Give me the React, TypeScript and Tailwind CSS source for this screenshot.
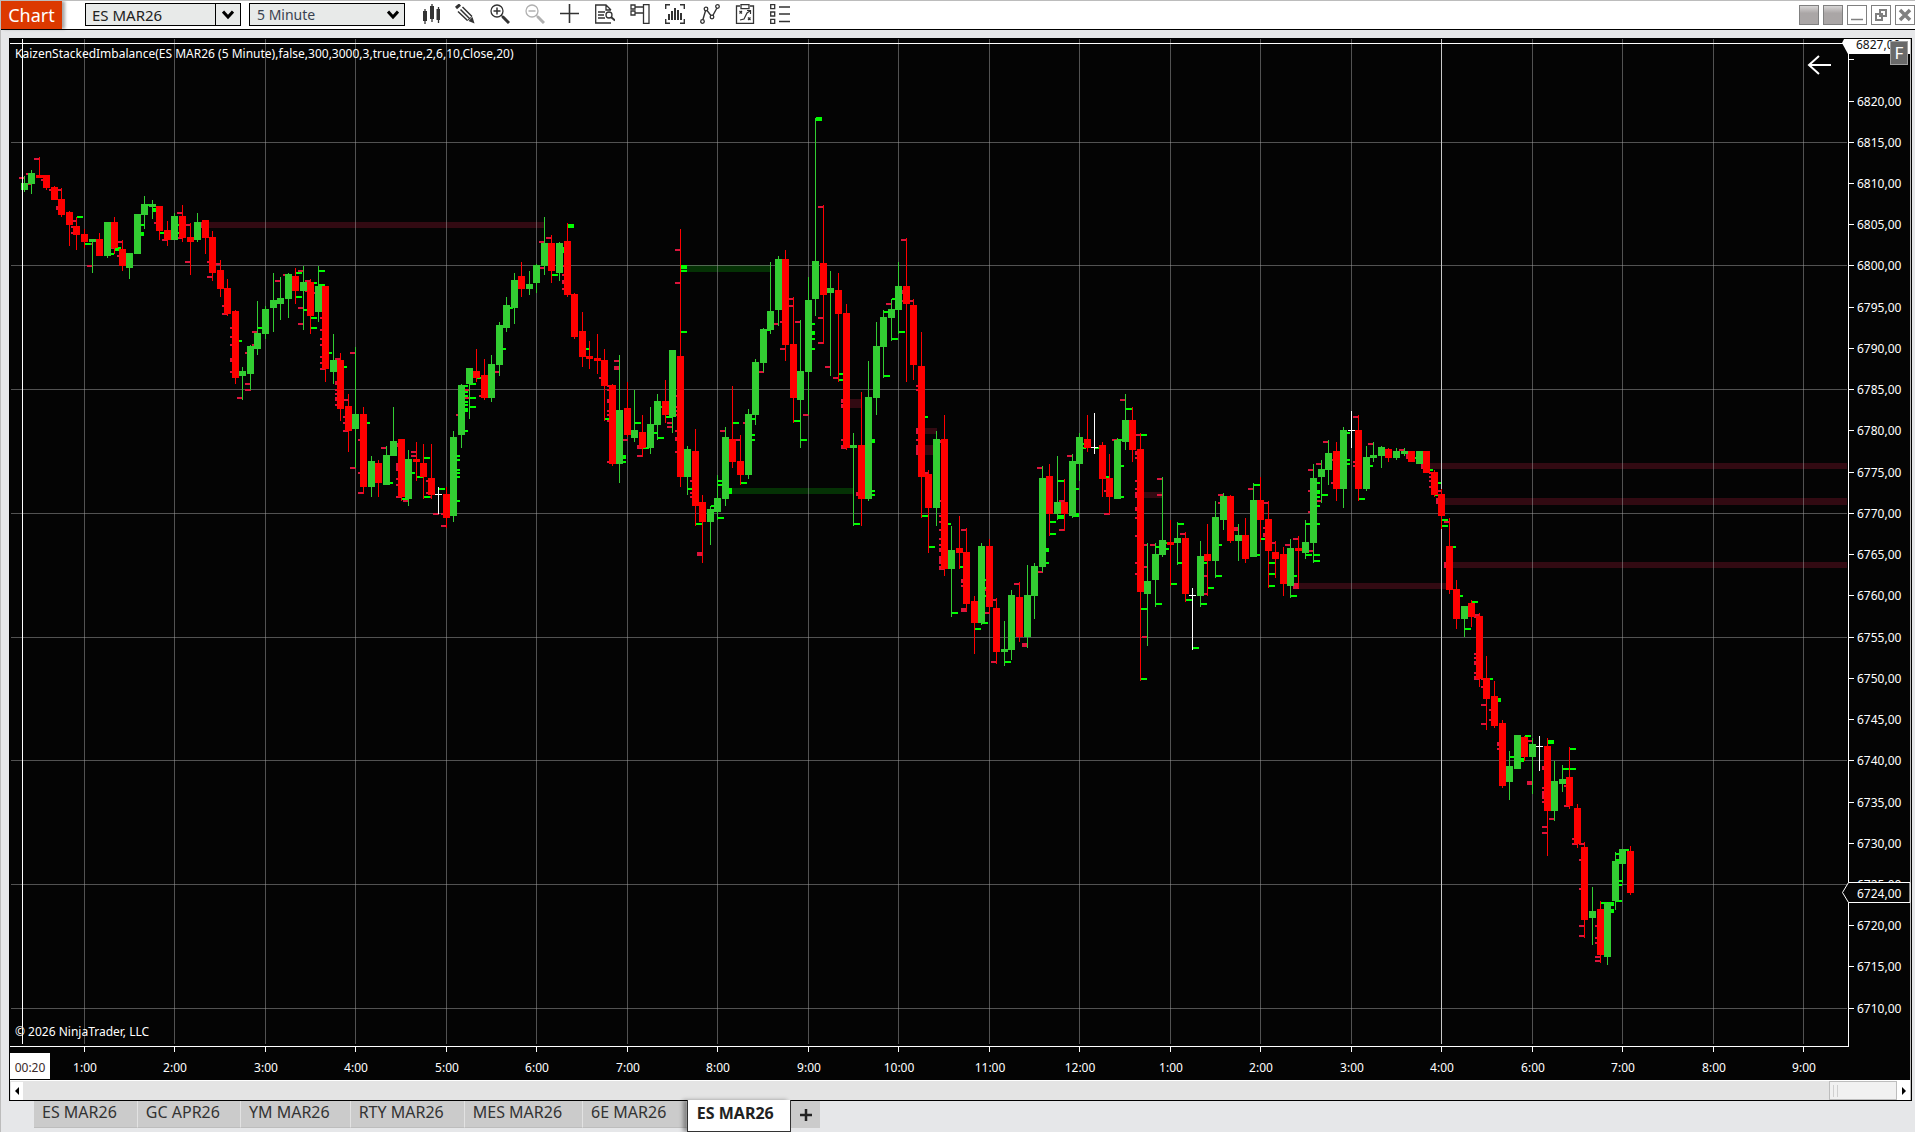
import React from "react";

type Kind = "u" | "d" | "w";
// kind, high, body top, body bottom, low (plot pixels)
type Candle = [Kind, number, number, number, number];
// candle index, y, height (one tick = 2px when left out)
type Mark = [number, number, number?];

const candles: Candle[] = [
  ["u", 176, 183, 190, 192], ["u", 170, 173, 184, 194], ["d", 157, 175, 178, 178], ["d", 175, 175, 188, 190],
  ["d", 186, 187, 200, 200], ["d", 188, 199, 215, 217], ["d", 211, 212, 225, 246], ["d", 217, 226, 235, 250],
  ["d", 229, 234, 242, 248], ["u", 239, 239, 242, 273], ["d", 233, 239, 256, 256], ["u", 222, 222, 256, 258],
  ["d", 217, 222, 248, 254], ["d", 240, 249, 266, 271], ["u", 253, 253, 268, 279], ["u", 214, 214, 254, 254],
  ["u", 196, 204, 215, 229], ["u", 200, 204, 207, 219], ["d", 206, 206, 231, 240], ["d", 221, 230, 240, 246],
  ["u", 213, 216, 240, 240], ["d", 205, 216, 238, 242], ["d", 223, 237, 242, 275], ["u", 213, 222, 240, 242],
  ["d", 220, 220, 238, 254], ["d", 231, 237, 273, 281], ["d", 260, 270, 289, 297], ["d", 279, 288, 314, 316],
  ["d", 310, 311, 378, 384], ["u", 367, 371, 376, 400], ["u", 345, 346, 374, 390], ["u", 301, 333, 349, 355],
  ["u", 306, 309, 334, 339], ["u", 273, 300, 308, 332], ["u", 277, 298, 304, 320], ["u", 273, 274, 299, 318],
  ["d", 268, 276, 291, 304], ["u", 266, 282, 291, 330], ["d", 279, 282, 316, 334], ["u", 266, 286, 312, 322],
  ["d", 286, 286, 369, 382], ["u", 334, 360, 372, 384], ["d", 353, 360, 409, 421], ["d", 394, 406, 431, 452],
  ["u", 347, 414, 429, 468], ["d", 407, 414, 487, 494], ["u", 456, 461, 487, 497], ["d", 460, 463, 483, 497],
  ["u", 446, 455, 485, 485], ["u", 407, 441, 456, 456], ["d", 439, 439, 497, 501], ["u", 450, 459, 499, 506],
  ["d", 442, 459, 462, 481], ["d", 444, 463, 477, 499], ["d", 444, 478, 495, 499], ["w", 487, 494, 495, 514],
  ["d", 487, 494, 518, 528], ["u", 431, 437, 516, 522], ["u", 384, 385, 435, 448], ["u", 368, 368, 384, 419],
  ["d", 349, 371, 378, 382], ["d", 359, 375, 398, 400], ["u", 355, 364, 398, 402], ["u", 322, 325, 365, 376],
  ["u", 297, 305, 328, 332], ["u", 273, 280, 308, 324], ["d", 262, 276, 289, 297], ["u", 271, 284, 289, 295],
  ["u", 264, 265, 283, 293], ["u", 217, 243, 266, 275], ["d", 235, 243, 271, 283], ["u", 242, 243, 273, 281],
  ["d", 223, 241, 295, 297], ["d", 293, 294, 337, 339], ["d", 312, 331, 357, 367], ["d", 341, 356, 359, 369],
  ["d", 334, 358, 361, 374], ["d", 349, 360, 386, 421], ["d", 384, 385, 464, 466], ["u", 355, 410, 464, 483],
  ["d", 382, 408, 435, 437], ["u", 390, 430, 438, 442], ["d", 415, 432, 448, 457], ["u", 407, 424, 448, 454],
  ["u", 394, 401, 425, 440], ["d", 380, 401, 415, 423], ["u", 350, 350, 417, 433], ["d", 229, 356, 477, 487],
  ["u", 446, 449, 477, 495], ["d", 429, 451, 506, 526], ["d", 495, 502, 522, 563], ["u", 506, 509, 522, 545],
  ["u", 475, 498, 512, 520], ["u", 427, 437, 499, 506], ["d", 386, 439, 462, 468], ["d", 435, 461, 475, 485],
  ["u", 409, 414, 475, 479], ["u", 359, 362, 415, 425], ["u", 328, 329, 363, 372], ["u", 262, 311, 330, 334],
  ["u", 256, 259, 310, 326], ["d", 250, 259, 345, 361], ["d", 297, 344, 398, 423], ["u", 320, 371, 400, 448],
  ["u", 277, 300, 372, 415], ["u", 118, 261, 299, 316], ["d", 205, 263, 295, 344], ["u", 271, 288, 293, 376],
  ["d", 273, 290, 314, 382], ["d", 304, 313, 448, 450], ["u", 433, 445, 448, 526], ["d", 392, 445, 499, 526],
  ["u", 361, 397, 499, 501], ["u", 322, 346, 398, 415], ["u", 310, 317, 347, 378], ["u", 299, 309, 318, 341],
  ["u", 262, 286, 310, 334], ["d", 238, 286, 304, 382], ["d", 299, 305, 365, 380], ["d", 332, 366, 477, 518],
  ["d", 470, 474, 508, 553], ["u", 431, 439, 508, 526], ["d", 415, 439, 569, 576], ["u", 526, 550, 569, 617],
  ["d", 516, 548, 553, 569], ["d", 528, 552, 604, 611], ["d", 596, 601, 623, 654], ["u", 543, 546, 623, 625],
  ["d", 539, 546, 607, 614], ["d", 598, 608, 652, 664], ["u", 621, 649, 652, 666], ["u", 590, 595, 650, 660],
  ["d", 582, 597, 637, 642], ["u", 565, 595, 637, 648], ["u", 563, 566, 596, 619], ["u", 466, 478, 567, 572],
  ["d", 464, 476, 514, 536], ["u", 456, 502, 514, 520], ["d", 479, 502, 514, 531], ["u", 454, 461, 516, 518],
  ["u", 433, 437, 464, 481], ["d", 415, 439, 448, 452], ["w", 413, 447, 448, 454], ["d", 442, 445, 479, 497],
  ["d", 454, 478, 497, 514], ["u", 438, 440, 499, 499], ["u", 394, 420, 442, 450], ["d", 407, 420, 450, 462],
  ["d", 433, 449, 592, 681], ["u", 543, 581, 594, 646], ["u", 543, 554, 580, 607], ["u", 477, 540, 555, 557],
  ["d", 520, 542, 545, 586], ["u", 522, 538, 543, 565], ["d", 532, 538, 594, 602], ["w", 588, 595, 596, 650],
  ["u", 541, 556, 596, 607], ["d", 524, 554, 561, 596], ["u", 501, 517, 561, 578], ["u", 493, 496, 520, 530],
  ["d", 495, 496, 541, 543], ["u", 524, 535, 541, 561], ["d", 518, 535, 559, 563], ["u", 483, 500, 557, 557],
  ["d", 477, 500, 520, 542], ["d", 501, 519, 551, 588], ["d", 541, 552, 559, 578], ["d", 547, 554, 584, 596],
  ["u", 539, 548, 586, 598], ["d", 536, 548, 551, 588], ["u", 520, 542, 553, 559], ["u", 464, 478, 543, 563],
  ["u", 460, 469, 477, 503], ["u", 440, 453, 470, 485], ["d", 442, 451, 489, 501], ["u", 427, 430, 489, 508],
  ["w", 411, 430, 431, 448], ["d", 415, 430, 489, 501], ["u", 446, 457, 489, 491], ["u", 442, 455, 458, 462],
  ["u", 446, 447, 456, 468], ["d", 448, 449, 458, 462], ["u", 448, 451, 458, 460], ["u", 448, 451, 454, 456],
  ["d", 451, 451, 462, 462], ["u", 451, 451, 464, 464], ["d", 451, 451, 473, 473], ["d", 470, 472, 495, 497],
  ["d", 489, 494, 516, 529], ["d", 518, 546, 590, 594], ["d", 580, 589, 619, 629], ["u", 606, 606, 619, 637],
  ["d", 600, 603, 617, 627], ["d", 613, 616, 679, 687], ["d", 656, 678, 699, 730], ["d", 681, 696, 726, 728],
  ["d", 720, 723, 786, 788], ["u", 751, 766, 782, 800], ["u", 735, 735, 769, 769], ["d", 736, 737, 757, 761],
  ["u", 738, 744, 757, 794], ["w", 736, 746, 747, 771], ["d", 738, 746, 811, 856], ["u", 761, 781, 811, 821],
  ["u", 765, 779, 784, 792], ["d", 747, 777, 806, 809], ["d", 804, 808, 844, 848], ["d", 842, 847, 920, 938],
  ["u", 887, 911, 918, 945], ["d", 901, 909, 955, 963], ["u", 902, 903, 957, 965], ["u", 852, 861, 901, 910],
  ["u", 849, 849, 864, 883], ["d", 846, 851, 893, 895],
];

const sellMarks: Mark[] = [
  [0, 177], [1, 173], [1, 183], [2, 158], [3, 179], [4, 189], [5, 189], [5, 206, 4], [7, 220], [7, 226], [7, 232],
  [9, 243], [9, 265], [12, 234], [12, 247], [13, 241], [13, 255], [18, 222], [19, 239], [21, 212], [21, 237],
  [22, 224], [22, 261], [24, 222, 6], [25, 261], [25, 276], [26, 263], [27, 305], [27, 313], [28, 327], [28, 336],
  [28, 344], [28, 358, 4], [28, 371], [29, 397], [30, 352], [30, 383], [30, 389], [31, 331], [31, 344], [34, 280],
  [35, 274], [37, 270], [37, 307], [37, 323], [38, 280], [38, 290], [39, 292], [40, 317], [40, 329], [40, 338],
  [40, 344], [40, 356], [40, 362], [40, 368], [42, 358], [42, 381, 4], [42, 389], [42, 393], [42, 397, 4], [42, 404],
  [43, 399], [43, 416], [43, 422], [43, 430], [44, 352], [44, 467], [45, 439], [45, 472], [45, 492], [48, 447],
  [50, 443, 4], [50, 463, 8], [50, 478], [50, 484], [50, 496], [51, 500], [52, 451], [52, 455], [53, 476],
  [54, 480], [54, 492], [54, 496], [55, 513], [56, 513], [56, 525], [58, 414], [59, 389], [59, 397], [61, 395],
  [63, 371], [69, 241], [69, 267], [70, 237], [72, 265], [72, 274], [72, 280, 4], [72, 288], [77, 377], [78, 385],
  [78, 389], [78, 399, 4], [78, 410], [78, 414], [78, 420], [78, 461], [79, 360], [79, 366, 4], [80, 439],
  [82, 445, 4], [82, 455], [86, 422], [86, 426], [87, 249], [87, 282], [87, 395], [87, 406], [87, 410], [87, 414],
  [87, 430], [87, 437, 4], [87, 451], [89, 480], [89, 492], [89, 496], [90, 552, 4], [93, 430], [95, 439],
  [96, 422], [98, 371], [100, 323], [101, 321], [101, 348], [102, 298], [102, 305], [103, 321], [104, 414],
  [106, 206], [106, 317], [106, 342], [107, 366], [108, 377], [109, 379], [109, 399, 4], [109, 404, 4], [109, 439],
  [109, 445, 4], [111, 492, 4], [115, 303], [117, 239], [117, 290, 4], [117, 300], [118, 300], [119, 385],
  [119, 389], [119, 428, 6], [119, 439], [119, 445, 10], [120, 472], [122, 440, 3], [122, 500], [122, 515],
  [122, 521], [122, 529], [122, 538], [122, 544], [122, 548, 4], [122, 556, 8], [122, 566, 4], [125, 529],
  [125, 579, 4], [125, 585], [125, 608, 4], [128, 589], [128, 612], [129, 599], [129, 661], [132, 583],
  [133, 643, 4], [135, 467], [135, 571], [138, 500], [138, 529], [139, 455], [144, 490], [144, 513], [145, 439],
  [146, 399], [147, 408], [148, 434], [148, 451, 4], [148, 457], [148, 480], [148, 488], [148, 492, 6],
  [148, 507, 4], [148, 517], [148, 535], [148, 562], [148, 573], [149, 544], [149, 566], [149, 636], [150, 544],
  [151, 478], [151, 494], [154, 533], [157, 575], [157, 593], [159, 494], [159, 502], [161, 527, 4], [163, 488],
  [165, 502], [165, 527], [165, 533, 4], [166, 542], [168, 544], [169, 538], [169, 583, 6], [171, 469], [171, 490],
  [171, 511], [171, 550], [172, 463], [172, 500], [173, 441], [174, 459], [174, 482], [177, 416], [177, 461],
  [177, 465], [179, 443], [181, 449], [183, 449], [184, 454, 5], [186, 464, 5], [187, 472], [187, 476], [187, 480],
  [187, 486], [188, 490], [188, 498, 6], [189, 521], [189, 562, 6], [193, 614, 4], [193, 653], [193, 657],
  [193, 661, 4], [193, 672], [193, 676, 4], [194, 678], [194, 686], [194, 704], [194, 723], [195, 709], [195, 719],
  [196, 742, 4], [196, 748], [200, 740], [200, 781, 4], [202, 766, 4], [202, 787], [202, 791, 8], [202, 801],
  [202, 826], [202, 832], [203, 818], [205, 779], [205, 785], [205, 805], [206, 838], [206, 843], [207, 843],
  [207, 859], [207, 888], [207, 925], [207, 935], [209, 925], [209, 937], [209, 942], [209, 956], [209, 960],
];

const buyMarks: Mark[] = [
  [7, 216], [8, 243], [11, 222], [11, 253], [12, 247, 4], [15, 224], [15, 232, 4], [16, 204], [17, 208, 4],
  [18, 232], [20, 224], [20, 232], [28, 340], [31, 327], [35, 282], [36, 272], [36, 296], [37, 309], [38, 282],
  [38, 317], [38, 327], [39, 270], [39, 284], [40, 352], [42, 366], [45, 422], [48, 482], [50, 498], [51, 472],
  [52, 476], [53, 457], [53, 496], [55, 488], [57, 455], [57, 459], [57, 469], [57, 472], [57, 476], [57, 500],
  [58, 385], [58, 391], [58, 395], [58, 401], [58, 404], [58, 408, 4], [58, 430], [59, 375], [59, 383], [59, 397],
  [59, 406], [60, 377], [63, 348], [64, 307], [70, 274], [71, 247, 6], [72, 224, 4], [74, 348], [77, 418],
  [79, 455, 4], [79, 461], [81, 422], [82, 447], [83, 432], [84, 406], [84, 437], [85, 416], [87, 265, 4],
  [87, 270], [87, 331], [88, 488], [89, 523], [91, 505], [92, 480], [92, 484], [92, 517], [93, 488, 6], [94, 422],
  [95, 482], [96, 418], [96, 434], [96, 439], [98, 329], [102, 420], [103, 439], [104, 323], [104, 331, 4],
  [104, 338], [104, 348], [105, 117, 4], [108, 373], [108, 379], [110, 523], [112, 439, 4], [112, 490], [112, 494],
  [114, 311], [114, 375], [115, 298], [115, 338], [116, 331], [119, 416], [119, 515], [120, 546], [122, 523],
  [123, 612], [124, 566], [126, 628], [127, 579], [127, 587], [127, 595], [127, 622], [130, 661], [135, 548, 4],
  [135, 562], [136, 521], [136, 533], [137, 480], [137, 515, 4], [139, 488], [139, 513, 4], [140, 443], [140, 447],
  [142, 447], [143, 476], [145, 439], [145, 465], [145, 496], [146, 408], [148, 434], [148, 608], [148, 678],
  [150, 546], [150, 603], [151, 542], [151, 548], [152, 583], [153, 523], [153, 562], [154, 599], [155, 647],
  [156, 562], [156, 603], [157, 587], [158, 544], [158, 575], [163, 484], [163, 554], [164, 538], [165, 562],
  [165, 573], [165, 585], [168, 575], [168, 595], [170, 523], [170, 554], [171, 482], [171, 490, 4], [171, 496],
  [171, 505], [171, 523], [171, 554], [171, 560], [172, 494], [175, 432], [175, 459], [175, 463], [177, 498],
  [178, 465], [184, 457], [186, 469], [187, 482], [187, 494], [188, 519], [188, 525], [189, 546], [190, 595],
  [191, 610], [191, 628], [192, 601], [194, 678], [195, 698, 4], [197, 756], [198, 758, 4], [199, 735],
  [202, 740, 4], [204, 768], [205, 748], [205, 768], [209, 902], [210, 902, 4], [210, 909, 4], [211, 853],
  [211, 859], [211, 880], [211, 884], [211, 900], [212, 849],
];

const zones = [
  { x: 203, y: 222, w: 341, h: 6, side: "sell" },
  { x: 681, y: 265, w: 89, h: 7, side: "buy" },
  { x: 731, y: 488, w: 123, h: 6, side: "buy" },
  { x: 848, y: 399, w: 14, h: 9, side: "sell" },
  { x: 921, y: 428, w: 16, h: 6, side: "sell" },
  { x: 921, y: 445, w: 14, h: 10, side: "sell" },
  { x: 1141, y: 492, w: 21, h: 6, side: "sell" },
  { x: 1294, y: 583, w: 155, h: 6, side: "sell" },
  { x: 1426, y: 463, w: 421, h: 6, side: "sell" },
  { x: 1441, y: 498, w: 406, h: 7, side: "sell" },
  { x: 1449, y: 562, w: 398, h: 6, side: "sell" },
];

const hours = ["1:00", "2:00", "3:00", "4:00", "5:00", "6:00", "7:00", "8:00", "9:00", "10:00", "11:00", "12:00", "1:00", "2:00", "3:00", "4:00", "6:00", "7:00", "8:00", "9:00"];
const prices = Array.from({ length: 24 }, (_, i) => 6825 - i * 5);
const tabs = ["ES MAR26", "GC APR26", "YM MAR26", "RTY MAR26", "MES MAR26", "6E MAR26"];

const barX = (i: number) => Math.round(84 + 7.54 * (i - 8));
const priceY = (p: number) => Math.round(265.45 + (6800 - p) * 8.247);

const colors = { u: "#32cd32", d: "#ff0000", w: "#ffffff" };

const PlotArea = () => (
  <svg className="block h-full min-w-0 flex-1" role="img" aria-label="ES MAR26 5 minute chart">
    <g transform="translate(-10 -39)" shapeRendering="crispEdges">
      {zones.map((z, i) => (
        <rect key={i} x={z.x} y={z.y} width={z.w} height={z.h} fill={z.side === "buy" ? "#053205" : "#320a12"} />
      ))}
      {prices.filter((p) => p % 15 === 5).map((p) => (
        <rect key={p} x={11} y={priceY(p)} width={1836} height={1} fill="#a0a0a0" fillOpacity={0.5} />
      ))}
      {hours.map((_, i) => (
        <rect
          key={i}
          x={barX(8 + i * 12)}
          y={39}
          width={1}
          height={1005}
          fill={i === 15 ? "#c8c8c8" : "#a0a0a0"}
          fillOpacity={i === 15 ? 1 : 0.5}
        />
      ))}
      {sellMarks.map(([i, y, h = 2], k) => (
        <rect key={k} x={barX(i) - 5} y={y} width={6} height={h} fill="#dc143c" />
      ))}
      {buyMarks.map(([i, y, h = 2], k) => (
        <rect key={k} x={barX(i) + 1} y={y} width={6} height={h} fill="#00ff00" />
      ))}
      {candles.map(([kind, high, top, bottom, low], i) => (
        <g key={i} fill={colors[kind]}>
          <rect x={barX(i)} y={high} width={1} height={low - high} />
          <rect x={barX(i) - 3} y={top} width={7} height={bottom - top} />
        </g>
      ))}
      <rect x={10} y={43} width={1834} height={1} fill="#fff" />
      <rect x={22} y={39} width={1} height={1005} fill="#fff" />
      <rect x={10} y={1046} width={1839} height={1} fill="#fff" />
    </g>
    <g transform="translate(-10 -39)">
      <text x={15} y={58} fill="#fff" fontSize={12}>
        KaizenStackedImbalance(ES MAR26 (5 Minute),false,300,3000,3,true,true,2,6,10,Close,20)
      </text>
      <text x={15} y={1036} fill="#fff" fontSize={12}>© 2026 NinjaTrader, LLC</text>
      <path d="M1831 65H1810M1819 56l-10 9 10 9" fill="none" stroke="#fff" strokeWidth={2} />
    </g>
  </svg>
);

const PriceAxis = () => (
  <svg className="block h-full w-[62px] shrink-0 overflow-visible">
    <g transform="translate(-1848 -39)">
      <rect x={1848} y={39} width={1} height={1008} fill="#fff" />
      {prices.map((p) => (
        <g key={p}>
          <rect x={1848} y={priceY(p)} width={6} height={1} fill="#fff" />
          {p < 6825 && <text x={1857} y={priceY(p) + 5} fill="#fff" fontSize={12}>{p},00</text>}
        </g>
      ))}
      <path d="M1848 39h62v15h-62l-6-11 2-4z" fill="#fff" />
      <text x={1856} y={49} fill="#111" fontSize={12}>6827,00</text>
      <path d="M1848.5 882.5h61.500v20h-61.500l-6-10z" fill="#050505" stroke="#fff" />
      <text x={1857} y={898} fill="#fff" fontSize={12}>6724,00</text>
      <rect x={1890.5} y={41.5} width={17} height={23} fill="#6a6a6a" stroke="#a0a0a0" />
      <text x={1899} y={59} fill="#fff" fontSize={17} textAnchor="middle">F</text>
    </g>
  </svg>
);

const TimeAxis = () => (
  <svg className="block h-[33px] w-full shrink-0">
    <g transform="translate(-10 -1047)">
      {hours.map((h, i) => (
        <g key={i}>
          <rect x={barX(8 + i * 12)} y={1047} width={1} height={5} fill="#fff" />
          <text x={barX(8 + i * 12) + 1} y={1072} fill="#fff" fontSize={12} textAnchor="middle">{h}</text>
        </g>
      ))}
      <rect x={10} y={1053} width={40} height={26} fill="#fff" />
      <text x={30} y={1072} fill="#3b2a2a" fontSize={12} textAnchor="middle">00:20</text>
    </g>
  </svg>
);

const Tool = ({ label, children, dim }: { label: string; children: React.ReactNode; dim?: boolean }) => (
  <button aria-label={label} className={dim ? "h-5 w-5 text-[#b0b0b0]" : "h-5 w-5 text-[#333333]"}>
    <svg viewBox="0 0 20 20" className="block h-5 w-5" fill="none" stroke="currentColor">{children}</svg>
  </button>
);

const Chevron = () => (
  <svg viewBox="0 0 12 10" className="block h-[10px] w-3" fill="none" stroke="#000" strokeWidth={3}>
    <path d="M1 1.500l5 5.500 5-5.500" />
  </svg>
);

const Magnifier = () => (
  <>
    <circle cx={7} cy={7} r={6} strokeWidth={1.300} />
    <path d="M11 11l2 2" strokeWidth={1.500} />
    <path d="M12.500 12.500l6.500 6.500" strokeWidth={3} />
    <path d="M3.500 7h7" strokeWidth={1.500} />
  </>
);

const Toolbar = () => (
  <header className="flex h-[29px] shrink-0 items-start border-b border-black bg-white">
    <h1 className="z-10 h-7 w-[61px] bg-[#dc3900] text-center text-[18px] leading-[29px] text-white shadow-[3px_0_3px_rgba(0,0,0,0.35)]">
      Chart
    </h1>
    <div className="mt-0.5 ml-[23px] flex h-[23px] w-[156px] border border-black bg-[#e8eae9]">
      <input
        aria-label="Instrument"
        defaultValue="ES MAR26"
        className="w-[130px] min-w-0 border-r border-black bg-transparent pl-1.5 text-[15px] leading-5 text-[#222] outline-none"
      />
      <button aria-label="Choose instrument" className="flex flex-1 items-center justify-center">
        <Chevron />
      </button>
    </div>
    <div className="relative mt-0.5 ml-2 h-[23px] w-[156px]">
      <select
        aria-label="Interval"
        className="block h-full w-full appearance-none border border-black bg-[#e8eae9] pl-[7px] text-[14px] leading-5 text-[#3a4250] outline-none"
      >
        <option>5 Minute</option>
      </select>
      <span className="pointer-events-none absolute top-[7px] right-1.5">
        <Chevron />
      </span>
    </div>
    <nav className="mt-[3px] ml-[15px] flex gap-[15px]">
      <Tool label="Chart style">
        <path d="M5 5v15M12 0v18M18.500 3v16" strokeWidth={1.300} />
        <path d="M5 7v10M12 2v13M18.500 5v11" strokeWidth={4} />
      </Tool>
      <Tool label="Drawing tools">
        <path d="M1 4l4-3.500" strokeWidth={3} />
        <path d="M3 7.500l9.500 9M7.500 3l9.500 9.500M5.500 5.500l9.500 9.500" strokeWidth={1.500} />
        <path d="M19.500 19.500l-6-2.500 4-4z" fill="currentColor" stroke="none" />
        <path d="M12.500 16.500l4.500-4" />
      </Tool>
      <Tool label="Zoom in">
        <Magnifier />
        <path d="M7 3.500v7" strokeWidth={1.500} />
      </Tool>
      <Tool label="Zoom out" dim>
        <Magnifier />
      </Tool>
      <Tool label="Crosshair">
        <path d="M0 9.500h19M9.500 0v19" strokeWidth={1.600} />
      </Tool>
      <Tool label="Data box">
        <path d="M16 19H.700V1H11l5 5M11 1v5h5M3 8h7M3 11h6M3 14h7" strokeWidth={1.300} />
        <circle cx={14} cy={11} r={3} strokeWidth={1.300} />
        <path d="M16 13l4 3.500" strokeWidth={2} />
      </Tool>
      <Tool label="Chart trader">
        <path d="M1 1h4v4H1zM1 7h4v4H1zM5 3h8M5 9h8M13.500.700h5.500v18.600h-5.500z" strokeWidth={1.300} />
      </Tool>
      <Tool label="Data series">
        <path d="M5 .700H.700V5M15 .700h4.300V5M5 19.300H.700V15M15 19.300h4.300V15" strokeWidth={1.400} />
        <path d="M4 10v6M7 7v9M10 4v12M13 6v10M16 9v7" strokeWidth={2} />
      </Tool>
      <Tool label="Indicators">
        <path d="M2.500 17L6 5l6 8 5.500-10" strokeWidth={1.400} />
        <g fill="#fff" strokeWidth={1.300}>
          <circle cx={2.500} cy={17.500} r={1.800} />
          <circle cx={6} cy={5} r={1.800} />
          <circle cx={12} cy={13} r={1.800} />
          <circle cx={17.500} cy={2.500} r={1.800} />
        </g>
      </Tool>
      <Tool label="Strategies">
        <path d="M5 2H1.500v17.300h17V2H15M6 .700h8v4H6z" strokeWidth={1.300} />
        <path d="M4.500 7l2.500 2.500M7 7L4.500 9.500M13 13.500l2.500 2.500M15.500 13.500L13 16M5 16l4-1 3-6 3-2M12 6.500h3.500V10" strokeWidth={1.200} />
      </Tool>
      <Tool label="Properties">
        <path d="M.700.700h4v4h-4zM.700 8h4v4h-4zM.700 15.300h4v4h-4z" strokeWidth={1.300} />
        <path d="M9 3h11M9 10h11M9 17.500h11" strokeWidth={1.600} />
      </Tool>
    </nav>
    <div className="mt-1 ml-auto flex gap-1 text-[#808080]">
      <button aria-label="Instrument link" className="h-5 w-5 border border-[#808080] bg-linear-to-b from-[#d8d6d6] to-[#aaa6a6] to-40%" />
      <button aria-label="Interval link" className="h-5 w-5 border border-[#808080] bg-linear-to-b from-[#d8d6d6] to-[#aaa6a6] to-40%" />
      <button aria-label="Minimize" className="h-5 w-5 border border-[#808080]">
        <svg viewBox="0 0 18 18" className="block" stroke="currentColor" strokeWidth={1.500}><path d="M3 13.500h12" /></svg>
      </button>
      <button aria-label="Restore" className="h-5 w-5 border border-[#808080]">
        <svg viewBox="0 0 18 18" className="block" fill="none" stroke="currentColor" strokeWidth={2}>
          <path d="M8 4h6v6H8zM4 8h6v6H4z" />
        </svg>
      </button>
      <button aria-label="Close" className="h-5 w-5 border border-[#808080]">
        <svg viewBox="0 0 18 18" className="block" stroke="currentColor" strokeWidth={3.500}><path d="M4 4l10 10M14 4L4 14" /></svg>
      </button>
    </div>
  </header>
);

const ScrollBar = () => (
  <div className="flex h-5 shrink-0 border-t border-white bg-[#e4e4e4]">
    <button aria-label="Scroll left" className="mt-px ml-px flex w-3 items-center justify-center bg-white">
      <svg viewBox="0 0 4 8" className="h-2 w-1"><path d="M4 0v8L0 4z" /></svg>
    </button>
    <div className="flex flex-1 justify-end">
      <div className="flex w-[68px] items-center gap-[3px] border border-[#bdbdbd] bg-[#f1f1f1] pl-[3px]">
        <span className="h-3 w-px bg-[#d0d0d0]" />
        <span className="h-3 w-px bg-[#d0d0d0]" />
      </div>
    </div>
    <button aria-label="Scroll right" className="flex w-[13px] items-center justify-center bg-white">
      <svg viewBox="0 0 4 8" className="h-2 w-1"><path d="M0 0v8l4-4z" /></svg>
    </button>
  </div>
);

export default function App() {
  return (
    <div className="flex h-screen flex-col overflow-hidden border-t border-l border-[#bcbcbc] bg-[#e6e7e9] font-['Noto_Sans','Open_Sans',sans-serif]">
      <Toolbar />
      <main className="mt-2 mr-[3px] ml-2 flex min-h-0 flex-1 flex-col border border-black bg-[#040404]">
        <div className="flex min-h-0 flex-1 flex-col border-r border-[#c0c0c0]">
          <div className="flex min-h-0 flex-1">
            <PlotArea />
            <PriceAxis />
          </div>
          <TimeAxis />
          <ScrollBar />
        </div>
      </main>
      <footer className="flex h-[31px] shrink-0 items-start pl-[33px]">
        {tabs.map((tab) => (
          <button
            key={tab}
            className="h-[27px] border-r border-b border-r-[#e2e2e2] border-b-[#bdbdbd] bg-[#cbcbcb] pr-5 pb-1 pl-2 text-[16px] leading-5 text-[#333]"
          >
            {tab}
          </button>
        ))}
        <button className="relative z-10 -mt-px h-8 w-[104px] border-x border-b border-[#333] bg-white pr-2 pb-1.5 text-[16px] leading-6 font-bold text-[#222] shadow-[-4px_0_4px_rgba(0,0,0,0.35)]">
          ES MAR26
        </button>
        <button aria-label="Add tab" className="flex h-[27px] w-[29px] items-center justify-center bg-[#cbcbcb]">
          <svg viewBox="0 0 12 12" className="h-3 w-3" stroke="#222" strokeWidth={2.500}><path d="M0 6h12M6 0v12" /></svg>
        </button>
      </footer>
    </div>
  );
}
